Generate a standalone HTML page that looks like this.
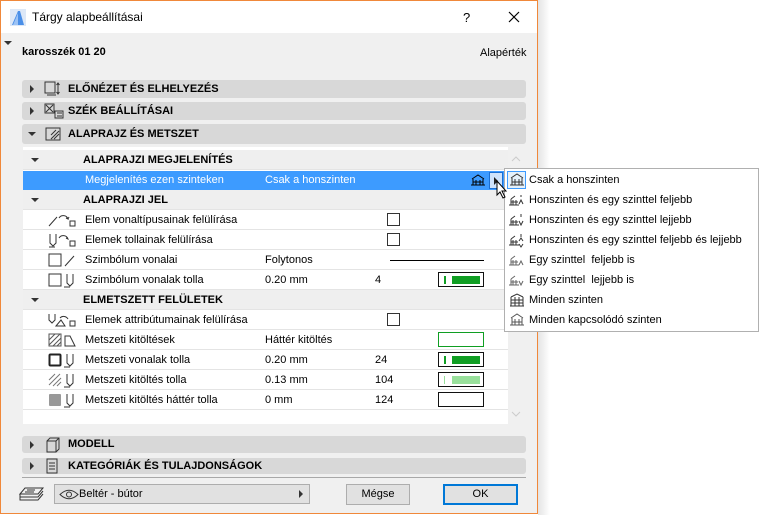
<!DOCTYPE html>
<html><head><meta charset="utf-8"><style>
*{box-sizing:border-box;margin:0;padding:0}
body{width:759px;height:515px;background:#fff;font-family:"Liberation Sans",sans-serif;font-size:11px;color:#000;position:relative;overflow:hidden}
.win{position:absolute;left:0;top:0;width:538px;height:514px;border:1px solid #f0883a;background:#f0f0f0}
.title{position:absolute;left:0;top:0;width:536px;height:32px;background:#fff}
.abs{position:absolute;white-space:nowrap}
.bar{position:absolute;left:21px;width:504px;background:#d8d8d8;border-radius:3px;font-weight:bold;font-size:11px}
.bar .t{position:absolute;left:46px;top:3px}
.tri{position:absolute;width:0;height:0}
.tr{border-top:4px solid transparent;border-bottom:4px solid transparent;border-left:4px solid #333}
.td{border-left:4px solid transparent;border-right:4px solid transparent;border-top:4px solid #333}
.row{position:absolute;left:22px;width:485px;height:20px;background:#fff;border-bottom:1px solid #e4e4e4}
.row.h{background:#efefef;font-weight:bold}
.row span{position:absolute;top:4px}
.cb{position:absolute;left:364px;top:3px;width:13px;height:13px;border:1px solid #333;background:#fff}
.sw{position:absolute;left:415px;top:2px;width:46px;height:15px;border:1px solid #111;background:#fff}
.menu{position:absolute;left:504px;top:168px;width:255px;height:164px;background:#fff;border:1px solid #b0b0b0}
.mi{position:absolute;left:24px;font-size:11px}
.btn{position:absolute;top:483px;height:21px;border:1px solid #adadad;background:#e1e1e1;text-align:center;line-height:19px}
</style></head><body>
<div class="win">
 <div class="title">
  <svg class="abs" style="left:9px;top:8px" width="16" height="17"><rect width="16" height="17" fill="#dde8f7"/><path d="M2 16 L8 2 L10 2 L14 16 Z" fill="#4a8fe8"/><path d="M3 16 L8 4 L8 16Z" fill="#9cc3f5"/></svg>
  <div class="abs" style="left:31px;top:9px;font-size:12px">Tárgy alapbeállításai</div>
  <div class="abs" style="left:462px;top:9px;font-size:13px">?</div>
  <svg class="abs" style="left:507px;top:10px" width="12" height="12"><path d="M1 1L11 11M11 1L1 11" stroke="#000" stroke-width="1.2"/></svg>
 </div>
 <div class="tri td" style="left:3px;top:40px"></div>
 <div class="abs" style="left:21px;top:45px;font-weight:bold">karosszék 01 20</div>
 <div class="abs" style="left:479px;top:46px">Alapérték</div>

 <div class="bar" style="top:79px;height:18px"><div class="tri tr" style="left:8px;top:5px"></div><svg class="abs" style="left:22px;top:1px" width="20" height="16"><rect x="1" y="1" width="10" height="11" fill="none" stroke="#333"/><path d="M3 14h9M14 2v11M12.5 4l1.5-2 1.5 2M12.5 11l1.5 2 1.5-2" stroke="#333" fill="none"/></svg><div class="t">ELŐNÉZET ÉS ELHELYEZÉS</div></div>
 <div class="bar" style="top:101px;height:18px"><div class="tri tr" style="left:8px;top:5px"></div><svg class="abs" style="left:22px;top:1px" width="20" height="16"><rect x="1" y="1" width="9" height="9" fill="none" stroke="#333"/><path d="M2 2l7 7M9 2L2 9M11 8h8v7h-8z M13 10h5M13 13h5" stroke="#333" fill="none"/></svg><div class="t">SZÉK BEÁLLÍTÁSAI</div></div>
 <div class="bar" style="top:123px;height:20px"><div class="tri td" style="left:6px;top:8px"></div><svg class="abs" style="left:22px;top:2px" width="20" height="16"><rect x="2" y="2" width="14" height="12" fill="none" stroke="#333"/><path d="M7 13l8-8M10 13l5-5M7 9l5-5" stroke="#333"/></svg><div class="t" style="top:4px">ALAPRAJZ ÉS METSZET</div></div>

 <div class="abs" style="left:22px;top:146px;width:485px;height:277px;background:#fff"></div>
 <div class="row h" style="top:149px"><div class="tri td" style="left:8px;top:8px"></div><span style="left:60px">ALAPRAJZI MEGJELENÍTÉS</span></div>
 <div class="row" style="top:170px;height:19px;background:#3d9bff;color:#fff;border:none"><span style="left:62px;top:3px">Megjelenítés ezen szinteken</span><span style="left:242px;top:3px">Csak a honszinten</span>
  <svg class="abs" style="left:447px;top:2px" width="16" height="15"><path d="M2 6L8 2L14 6M3 6v6M13 6v6M1 12h14M6 7v5M10 7v5M3 9h10" stroke="#000" fill="none"/></svg>
  <div class="abs" style="left:466px;top:1px;width:14px;height:17px;background:#cfe3fb;border:1px solid #1a6fd4"><div class="tri tr" style="left:4px;top:4px;border-left-color:#222"></div></div>
 </div>
 <div class="row h" style="top:189px"><div class="tri td" style="left:8px;top:8px"></div><span style="left:60px">ALAPRAJZI JEL</span></div>
 <div class="row" style="top:209px"><svg class="abs" style="left:24px;top:2px" width="30" height="16"><path d="M2 14L10 5M12 6a5 5 0 0 1 9 1l-2-1M21 7l1-2" stroke="#333" fill="none"/><rect x="23" y="9" width="5" height="5" fill="none" stroke="#333"/></svg><span style="left:62px">Elem vonaltípusainak felülírása</span><div class="cb"></div></div>
 <div class="row" style="top:229px"><svg class="abs" style="left:24px;top:2px" width="30" height="16"><path d="M3 2v9l3 3 3-3V2M2 15h6M12 6a5 5 0 0 1 9 1l-2-1" stroke="#333" fill="none"/><rect x="23" y="9" width="5" height="5" fill="none" stroke="#333"/></svg><span style="left:62px">Elemek tollainak felülírása</span><div class="cb"></div></div>
 <div class="row" style="top:249px"><svg class="abs" style="left:24px;top:2px" width="30" height="16"><rect x="2" y="2" width="12" height="12" fill="none" stroke="#333"/><path d="M18 14l9-10" stroke="#333"/></svg><span style="left:62px">Szimbólum vonalai</span><span style="left:242px">Folytonos</span><div class="abs" style="left:367px;top:10px;width:94px;height:1px;background:#000"></div></div>
 <div class="row" style="top:269px"><svg class="abs" style="left:24px;top:2px" width="30" height="16"><rect x="2" y="2" width="12" height="12" fill="none" stroke="#333"/><path d="M20 2v9l3 3 3-3V2M17 15h6" stroke="#333" fill="none"/></svg><span style="left:62px">Szimbólum vonalak tolla</span><span style="left:242px">0.20 mm</span><span style="left:352px">4</span><div class="sw"><div class="abs" style="left:5px;top:3px;width:2px;height:8px;background:#109e23"></div><div class="abs" style="left:13px;top:3px;width:28px;height:8px;background:#109e23"></div></div></div>
 <div class="row h" style="top:289px"><div class="tri td" style="left:8px;top:8px"></div><span style="left:60px">ELMETSZETT FELÜLETEK</span></div>
 <div class="row" style="top:309px"><svg class="abs" style="left:24px;top:2px" width="30" height="16"><path d="M2 2v6l3 3 3-3V2M9 14l5-6 4 6zM13 6a5 5 0 0 1 8 1" stroke="#333" fill="none"/><rect x="23" y="9" width="5" height="5" fill="none" stroke="#333"/></svg><span style="left:62px">Elemek attribútumainak felülírása</span><div class="cb"></div></div>
 <div class="row" style="top:329px"><svg class="abs" style="left:24px;top:2px" width="30" height="16"><rect x="2" y="2" width="12" height="12" fill="none" stroke="#555"/><path d="M2 8l6-6M2 13l11-11M6 14l8-8M10 14l4-4" stroke="#555"/><path d="M18 14V4h5l5 10z" fill="none" stroke="#333"/></svg><span style="left:62px">Metszeti kitöltések</span><span style="left:242px">Háttér kitöltés</span><div class="sw" style="border-color:#109e23"></div></div>
 <div class="row" style="top:349px"><svg class="abs" style="left:24px;top:2px" width="30" height="16"><rect x="2.5" y="2.5" width="11" height="11" rx="1" fill="none" stroke="#222" stroke-width="2"/><path d="M20 2v9l3 3 3-3V2M17 15h6" stroke="#333" fill="none"/></svg><span style="left:62px">Metszeti vonalak tolla</span><span style="left:242px">0.20 mm</span><span style="left:352px">24</span><div class="sw"><div class="abs" style="left:5px;top:3px;width:2px;height:8px;background:#109e23"></div><div class="abs" style="left:13px;top:3px;width:28px;height:8px;background:#109e23"></div></div></div>
 <div class="row" style="top:369px"><svg class="abs" style="left:24px;top:2px" width="30" height="16"><path d="M2 8l6-6M2 13l11-11M6 14l8-8M10 14l4-4" stroke="#777"/><path d="M20 2v9l3 3 3-3V2M17 15h6" stroke="#333" fill="none"/></svg><span style="left:62px">Metszeti kitöltés tolla</span><span style="left:242px">0.13 mm</span><span style="left:352px">104</span><div class="sw"><div class="abs" style="left:5px;top:3px;width:1px;height:8px;background:#98e09b"></div><div class="abs" style="left:13px;top:3px;width:28px;height:8px;background:#98e09b"></div></div></div>
 <div class="row" style="top:389px"><svg class="abs" style="left:24px;top:2px" width="30" height="16"><rect x="2" y="2" width="12" height="12" rx="1" fill="#999"/><path d="M20 2v9l3 3 3-3V2M17 15h6" stroke="#333" fill="none"/></svg><span style="left:62px">Metszeti kitöltés háttér tolla</span><span style="left:242px">0 mm</span><span style="left:352px">124</span><div class="sw"></div></div>
 <svg class="abs" style="left:510px;top:155px" width="10" height="6"><path d="M1 5l4-4 4 4" stroke="#ccc" fill="none"/></svg>
 <svg class="abs" style="left:510px;top:410px" width="10" height="6"><path d="M1 1l4 4 4-4" stroke="#ccc" fill="none"/></svg>

 <div class="bar" style="top:435px;height:17px"><div class="tri tr" style="left:8px;top:5px"></div><svg class="abs" style="left:22px;top:0px" width="20" height="17"><path d="M3 5l3-3h9v11l-3 3H3z M3 5h9v11M12 5l3-3" stroke="#333" fill="none"/></svg><div class="t" style="top:2px">MODELL</div></div>
 <div class="bar" style="top:457px;height:16px"><div class="tri tr" style="left:8px;top:4px"></div><svg class="abs" style="left:23px;top:0px" width="14" height="16"><rect x="2" y="1" width="10" height="14" fill="none" stroke="#333"/><path d="M4 5h6M4 8h6M4 11h6" stroke="#333"/></svg><div class="t" style="top:2px">KATEGÓRIÁK ÉS TULAJDONSÁGOK</div></div>
 <div class="abs" style="left:21px;top:476px;width:504px;height:1px;background:#a8a8a8"></div>

 <svg class="abs" style="left:18px;top:485px" width="26" height="18"><path d="M6 2h18l-5 6H1z M1 8v3h18l5-6M1 11v3h18l5-6" fill="none" stroke="#333"/><path d="M8 4h8M6 6h9" stroke="#333"/></svg>
 <div class="abs" style="left:53px;top:483px;width:256px;height:20px;border:1px solid #adadad;background:#e1e1e1">
  <svg class="abs" style="left:4px;top:4px" width="20" height="11"><path d="M1 5.5Q10-3 19 5.5Q10 14 1 5.5z" fill="none" stroke="#333"/><circle cx="10" cy="5.5" r="2.5" fill="none" stroke="#333"/></svg>
  <div class="abs" style="left:24px;top:3px">Beltér - bútor</div>
  <div class="tri tr" style="left:244px;top:5px"></div>
 </div>
 <div class="btn" style="left:345px;width:64px">Mégse</div>
 <div class="btn" style="left:442px;width:75px;border:2px solid #0078d7;line-height:17px">OK</div>
</div>
<div class="abs" style="left:538px;top:0;width:12px;height:515px;background:linear-gradient(to right,#e4e4e4,#fff)"></div>

<div class="menu">
 <div class="abs" style="left:2px;top:2px;width:19px;height:18px;border:1px solid #3d9bff;background:#e5f1fb"></div>
 <svg class="abs" style="left:3px;top:3px" width="18" height="160" fill="none" stroke="#333">
  <g transform="translate(0,0)"><path d="M3 6L9 2L15 6M4 6v7M14 6v7M2 13h14M7 7v6M11 7v6M4 10h10"/></g>
  <g transform="translate(0,20)"><path d="M3 7L7 4M3 7v6M1 13h10M5 8v5M8 8v5M3 10h7M13 3v2M11 12l2-4 2 4"/></g>
  <g transform="translate(0,40)"><path d="M3 7L7 4M3 7v6M1 13h10M5 8v5M8 8v5M3 10h7M13 2v3M11 9l2 4 2-4"/></g>
  <g transform="translate(0,60)"><path d="M3 7L7 4M3 7v6M1 13h10M5 8v5M8 8v5M3 10h7M13 2v3M11 9l2-3 2 3M11 12l2 3 2-3"/></g>
  <g transform="translate(0,80)" stroke="#666"><path d="M3 7L7 4M3 7v6M1 13h10M5 8v5M8 8v5M3 10h7M11 13l2-4 2 4"/></g>
  <g transform="translate(0,100)" stroke="#666"><path d="M3 7L7 4M3 7v6M1 13h10M5 8v5M8 8v5M3 10h7M11 9l2 4 2-4"/></g>
  <g transform="translate(0,120)"><path d="M3 5L9 2L15 5M3 5v9M15 5v9M2 14h14M7 5v9M11 5v9M3 8h12M3 11h12"/></g>
  <g transform="translate(0,140)" stroke="#555"><path d="M3 6L9 2L15 6M4 6v7M14 6v7M2 13h14M7 7v6M11 7v6M4 10h10"/></g>
 </svg>
 <div class="mi" style="top:5px">Csak a honszinten</div>
 <div class="mi" style="top:25px">Honszinten és egy szinttel feljebb</div>
 <div class="mi" style="top:45px">Honszinten és egy szinttel lejjebb</div>
 <div class="mi" style="top:65px">Honszinten és egy szinttel feljebb és lejjebb</div>
 <div class="mi" style="top:85px">Egy szinttel&nbsp; feljebb is</div>
 <div class="mi" style="top:105px">Egy szinttel&nbsp; lejjebb is</div>
 <div class="mi" style="top:125px">Minden szinten</div>
 <div class="mi" style="top:145px">Minden kapcsolódó szinten</div>
</div>
<svg class="abs" style="left:496px;top:180px" width="14" height="20"><path d="M1 1v14l3-3 3 6 2-1-3-6h4z" fill="#fff" stroke="#000"/></svg>
</body></html>
